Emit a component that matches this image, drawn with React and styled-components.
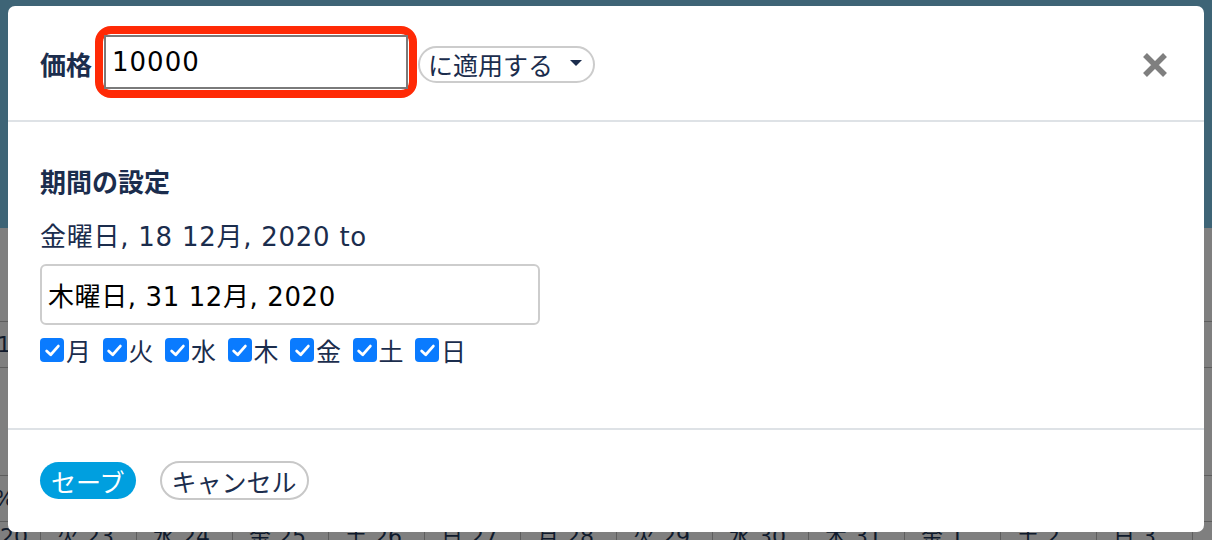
import React from "react";
import styled, { createGlobalStyle } from "styled-components";

const Global = createGlobalStyle`
  html, body { margin: 0; padding: 0; }
  body {
    width: 1212px; height: 540px; overflow: hidden;
    font-family: "DejaVu Sans", "Noto Sans CJK JP", sans-serif;
    background: #808080;
  }
`;

const FONT = `"DejaVu Sans", "Noto Sans CJK JP", sans-serif`;
const NAVY = "#1b2d4d";

/* ---------- backdrop page (seen through the dark overlay) ---------- */
const Page = styled.div`
  position: relative;
  width: 1212px;
  height: 540px;
  display: grid;
  grid-template-rows: 228px 1fr;
  background: #7f7f7f;
  overflow: hidden;
  font-family: ${FONT};
`;
const PageHeader = styled.div`
  background: #3e6476;
`;
const PageBody = styled.div`
  display: flex;
  flex-direction: column;
  color: #101a2c;
`;
const PageRow = styled.div`
  height: ${(p) => p.$h}px;
  box-sizing: border-box;
  border-bottom: ${(p) => (p.$line ? "1px solid #5e5e5e" : "none")};
  display: flex;
  align-items: ${(p) => p.$align || "center"};
  justify-content: space-between;
  font-size: 22px;
`;
const EdgeText = styled.span`
  margin: ${(p) => p.$m || "0"};
`;
const EdgePill = styled.span`
  width: 40px;
  height: 44px;
  border: 1px solid #6a6a6a;
  border-radius: 12px;
  margin-right: -22px;
`;
const DayRow = styled.div`
  display: grid;
  grid-template-columns: 40px repeat(13, 96px);
  height: 40px;
  border-top: 1px solid #5e5e5e;
  font-size: 22px;
`;
const DayCell = styled.div`
  border-left: ${(p) => (p.$first ? "none" : "1px solid #5e5e5e")};
  padding: 0 0 0 ${(p) => (p.$first ? 0 : 16)}px;
  margin-top: 2px;
  line-height: 26px;
  color: #0f1a2c;
  white-space: nowrap;
  overflow: hidden;
`;

/* ---------- modal ---------- */
const Modal = styled.div`
  position: absolute;
  left: 8px;
  top: 6px;
  width: 1196px;
  height: 526px;
  background: #fff;
  border-radius: 7px;
  display: flex;
  flex-direction: column;
  color: ${NAVY};
  font-family: ${FONT};
`;
const Header = styled.div`
  height: 116px;
  box-sizing: border-box;
  border-bottom: 2px solid #dee2e6;
  display: flex;
  align-items: center;
  padding: 0 32px 2px;
`;
const PriceLabel = styled.span`
  font-family: "Noto Sans CJK JP", sans-serif;
  font-size: 26px;
  font-weight: 700;
  margin-right: 4px;
  margin-top: 2px;
`;
const PriceFrame = styled.div`
  border: 8px solid #ff2a06;
  border-radius: 16px;
  padding: 1px;
  margin-left: -1px;
`;
const PriceInput = styled.div`
  width: 304px;
  height: 54px;
  box-sizing: border-box;
  border: 2px solid #7a7a7a;
  display: flex;
  align-items: center;
  padding-left: 6px;
  font-size: 26px;
  letter-spacing: 1px;
  color: #000;
`;
const SelectPill = styled.div`
  margin-left: 1px;
  margin-top: 4px;
  height: 37px;
  box-sizing: border-box;
  border: 2px solid #cccccc;
  border-radius: 19px;
  display: flex;
  align-items: center;
  padding: 0 11px 0 8px;
  font-size: 25px;
  gap: 17px;
`;
const Caret = styled.span`
  width: 0; height: 0;
  border-left: 6px solid transparent;
  border-right: 6px solid transparent;
  border-top: 6px solid ${NAVY};
  margin-top: -3px;
`;
const Close = styled.button`
  margin-left: auto;
  margin-right: 3px;
  margin-top: 6px;
  background: none;
  border: none;
  padding: 0;
  width: 28px; height: 28px;
  display: flex; align-items: center; justify-content: center;
  cursor: pointer;
`;

const Body = styled.div`
  height: 308px;
  border-bottom: 2px solid #dee2e6;
  box-sizing: border-box;
  padding: 43px 32px 0;
  display: flex;
  flex-direction: column;
  align-items: flex-start;
`;
const SectionTitle = styled.h3`
  margin: 0;
  font-family: "Noto Sans CJK JP", sans-serif;
  font-size: 26px;
  font-weight: 700;
  line-height: 32px;
`;
const FromText = styled.div`
  margin-top: 24px;
  font-size: 26px;
  line-height: 32px;
  letter-spacing: 0.75px;
`;
const DateInput = styled.div`
  margin-top: 11px;
  width: 500px;
  height: 61px;
  box-sizing: border-box;
  border: 2px solid #cdcdcd;
  border-radius: 6px;
  display: flex;
  align-items: center;
  padding-left: 6px;
  font-size: 26px;
  letter-spacing: 0.6px;
  color: #000;
`;
const Days = styled.div`
  margin-top: 11px;
  display: flex;
  gap: 11.5px;
`;
const Day = styled.label`
  display: flex;
  align-items: center;
  font-family: "Noto Sans CJK JP", sans-serif;
  font-size: 25px;
  line-height: 28px;
`;
const Check = styled.span`
  width: 24px; height: 24px;
  border-radius: 4px;
  background: #0a7bff;
  display: flex; align-items: center; justify-content: center;
  margin-right: 2px;
`;

const Footer = styled.div`
  flex: 1;
  display: flex;
  align-items: center;
  padding: 0 32px 1px;
  gap: 24px;
`;
const Btn = styled.button`
  height: ${(p) => (p.$primary ? 37 : 39)}px;
  border-radius: 20px;
  border: ${(p) => (p.$primary ? "none" : "2px solid #c8c8c8")};
  background: ${(p) => (p.$primary ? "#009fdf" : "#fff")};
  color: ${(p) => (p.$primary ? "#fff" : NAVY)};
  font-family: "Noto Sans CJK JP", sans-serif;
  font-size: 25px;
  padding: 0 ${(p) => (p.$primary ? 11 : 10)}px;
  display: flex; align-items: center;
  cursor: pointer;
`;

const days = ["月", "火", "水", "木", "金", "土", "日"];
const bottomCells = ["20", "火 23", "水 24", "金 25", "土 26", "日 27", "月 28", "火 29", "水 30", "木 31", "金 1", "土 2", "日 3", ""];

export default function App() {
  return (
    <>
      <Global />
      <Page>
        <PageHeader />
        <PageBody>
          <PageRow $h={94} $line />
          <PageRow $h={46} $line>
            <EdgeText $m="0 0 0 -3px">1</EdgeText>
            <EdgePill />
          </PageRow>
          <PageRow $h={108} $line $align="flex-end">
            <span />
            <EdgeText $m="0 -8px 12px 0">2</EdgeText>
          </PageRow>
          <PageRow $h={45}>
            <EdgeText $m="0 0 0 -6px">%</EdgeText>
          </PageRow>
          <DayRow>
            {bottomCells.map((c, i) => (
              <DayCell key={i} $first={i === 0}>{c}</DayCell>
            ))}
          </DayRow>
        </PageBody>

        <Modal>
          <Header>
            <PriceLabel>価格</PriceLabel>
            <PriceFrame>
              <PriceInput>10000</PriceInput>
            </PriceFrame>
            <SelectPill>
              に適用する
              <Caret />
            </SelectPill>
            <Close aria-label="close">
              <svg width="26" height="26" viewBox="0 0 26 26">
                <path d="M3 3 L23 23 M23 3 L3 23" stroke="#7f7f7f" strokeWidth="5.5" strokeLinecap="butt" />
              </svg>
            </Close>
          </Header>
          <Body>
            <SectionTitle>期間の設定</SectionTitle>
            <FromText>金曜日, 18 12月, 2020 to</FromText>
            <DateInput>木曜日, 31 12月, 2020</DateInput>
            <Days>
              {days.map((d) => (
                <Day key={d}>
                  <Check>
                    <svg width="17" height="17" viewBox="0 0 16 16">
                      <path d="M2.5 8.5 L6.3 12 L13.5 3.8" fill="none" stroke="#fff" strokeWidth="2.6" strokeLinecap="round" strokeLinejoin="round" />
                    </svg>
                  </Check>
                  {d}
                </Day>
              ))}
            </Days>
          </Body>
          <Footer>
            <Btn $primary>セーブ</Btn>
            <Btn>キャンセル</Btn>
          </Footer>
        </Modal>
      </Page>
    </>
  );
}
